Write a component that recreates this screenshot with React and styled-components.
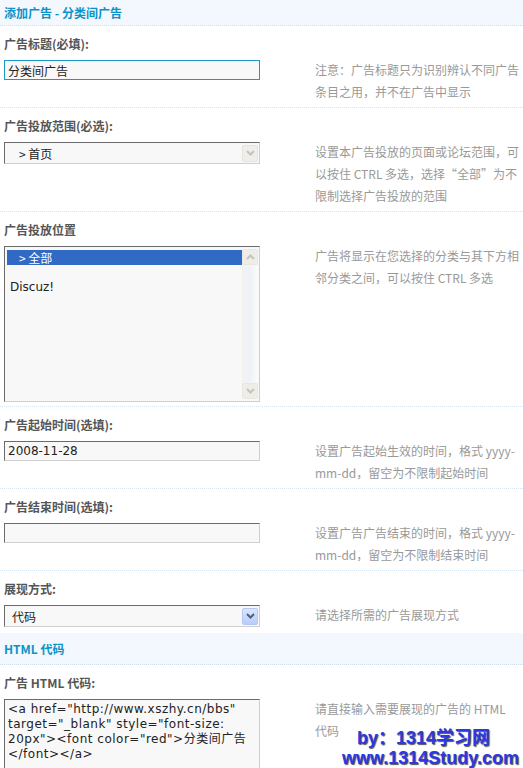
import React from 'react'
import styled, { createGlobalStyle } from 'styled-components'

const GlobalStyle = createGlobalStyle`
  html, body {
    margin: 0;
    padding: 0;
    background: #fff;
  }
  body {
    font-family: "Noto Sans CJK SC", "DejaVu Sans", sans-serif;
    font-size: 12px;
    color: #333;
  }
`

const Page = styled.div`
  position: relative;
  width: 523px;
  height: 768px;
  overflow: hidden;
  background: #fff;
`

const SectionHead = styled.div`
  display: flex;
  align-items: center;
  height: ${p => p.$h}px;
  padding-left: 4px;
  background: #f2f8fe;
  border-bottom: 1px dotted #c9dff0;
  color: #0a93c8;
  font-weight: bold;
  font-size: 12px;
`

const Row = styled.div`
  padding: 8px 0 ${p => (p.$last ? 6 : 4)}px 4px;
  border-bottom: ${p => (p.$last ? 'none' : '1px dotted #d6e6f2')};
`

const Label = styled.div`
  font-weight: bold;
  color: #555;
  line-height: 20px;
  margin-bottom: 6px;
`

const Body = styled.div`
  display: grid;
  grid-template-columns: 256px 208px;
  column-gap: 55px;
  align-items: start;
`

const Tip = styled.div`
  margin-top: -1px;
  color: #999;
  line-height: 22px;
  white-space: nowrap;
`

const TextInput = styled.input`
  display: block;
  box-sizing: border-box;
  width: 256px;
  height: 20px;
  margin: 0;
  padding: 0 3px;
  border: 1px solid;
  border-color: ${p => (p.$focus ? '#1a98c9' : '#6b6b6b #cfcfcf #cfcfcf #6b6b6b')};
  background: #f8f8f8;
  color: #222;
  font-family: ${p => (p.$latin ? '"DejaVu Sans", sans-serif' : '"Noto Sans CJK SC", sans-serif')};
  font-size: 12px;
  outline: none;
`

const SelectBox = styled.div`
  box-sizing: border-box;
  width: 256px;
  height: 22px;
  display: flex;
  align-items: center;
  justify-content: space-between;
  padding: 0 1px 0 ${p => p.$pad}px;
  border: 1px solid;
  border-color: #6b6b6b #cfcfcf #cfcfcf #6b6b6b;
  background: #f8f8f8;
  color: #222;
`

const ArrowBtn = styled.div`
  width: 16px;
  height: 17px;
  display: flex;
  align-items: center;
  justify-content: center;
  box-sizing: border-box;
  border: 1px solid ${p => (p.$active ? '#b4c8f5' : '#e6e5dd')};
  border-radius: 2px;
  background: ${p => (p.$active ? 'linear-gradient(#dbe5fd, #b9cdfa)' : '#efeee8')};
`

const ListBox = styled.div`
  box-sizing: border-box;
  width: 256px;
  height: 156px;
  display: flex;
  padding: 2px 1px 2px 2px;
  border: 1px solid;
  border-color: #6b6b6b #cfcfcf #cfcfcf #6b6b6b;
  background: #f8f8f8;
`

const Options = styled.div`
  flex: 1;
  padding-top: 1px;
`

const Option = styled.div`
  height: 15px;
  line-height: 15px;
  padding-left: ${p => p.$pad}px;
  background: ${p => (p.$selected ? '#316ac5' : 'transparent')};
  color: ${p => (p.$selected ? '#fff' : '#222')};
  font-family: ${p => (p.$latin ? '"DejaVu Sans", sans-serif' : 'inherit')};
`

const ScrollBar = styled.div`
  width: 16px;
  display: flex;
  flex-direction: column;
  justify-content: space-between;
  background: linear-gradient(90deg, #f3f3ef, #eef2f6 50%, #fbfbf8);
`

const ScrollBtn = styled.div`
  width: 16px;
  height: 16px;
  display: flex;
  align-items: center;
  justify-content: center;
  box-sizing: border-box;
  border: 1px solid #e8e7e0;
  border-radius: 2px;
  background: #eeede7;
`

const TextArea = styled.div`
  box-sizing: border-box;
  width: 256px;
  height: 90px;
  padding: 2px 3px;
  border: 1px solid;
  border-color: #6b6b6b #cfcfcf #cfcfcf #6b6b6b;
  background: #f8f8f8;
  color: #222;
  font-family: "DejaVu Sans", "Noto Sans CJK SC", sans-serif;
  font-size: 12px;
  line-height: 15px;
  letter-spacing: 0.5px;
  white-space: nowrap;
`

const Watermark = styled.div`
  position: absolute;
  right: 4px;
  bottom: 0;
  display: flex;
  flex-direction: column;
  align-items: flex-end;
  font-family: "Liberation Sans", "Noto Sans CJK SC", sans-serif;
  font-weight: bold;
  font-size: 18px;
  line-height: 20px;
  color: #2a39e4;
  text-shadow: 1px 1px 1px #555;
`

const WmLine = styled.div`
  padding-right: ${p => p.$pr}px;
`

const Chevron = ({ up, color }) => (
  <svg width="9" height="6" viewBox="0 0 9 6">
    <path d={up ? 'M1 5 L4.5 1.5 L8 5' : 'M1 1 L4.5 4.5 L8 1'} fill="none" stroke={color} strokeWidth="2" />
  </svg>
)

const Help = ({ lines }) => (
  <Tip>
    {lines.map((l, i) => (
      <div key={i}>{l}</div>
    ))}
  </Tip>
)

export default function App() {
  return (
    <Page>
      <GlobalStyle />
      <SectionHead $h={25}>添加广告 - 分类间广告</SectionHead>

      <Row>
        <Label>广告标题(必填):</Label>
        <Body>
          <TextInput $focus readOnly value="分类间广告" />
          <Help lines={['注意：广告标题只为识别辨认不同广告', '条目之用，并不在广告中显示']} />
        </Body>
      </Row>

      <Row>
        <Label>广告投放范围(必选):</Label>
        <Body>
          <SelectBox $pad={14}>
            <span>&gt; 首页</span>
            <ArrowBtn>
              <Chevron color="#c4c4bc" />
            </ArrowBtn>
          </SelectBox>
          <Help
            lines={[
              '设置本广告投放的页面或论坛范围，可',
              '以按住 CTRL 多选，选择“全部”为不',
              '限制选择广告投放的范围',
            ]}
          />
        </Body>
      </Row>

      <Row>
        <Label>广告投放位置</Label>
        <Body>
          <ListBox>
            <Options>
              <Option $selected $pad={12}>&gt; 全部</Option>
              <Option />
              <Option $latin $pad={3}>Discuz!</Option>
            </Options>
            <ScrollBar>
              <ScrollBtn>
                <Chevron up color="#c4c4bc" />
              </ScrollBtn>
              <ScrollBtn>
                <Chevron color="#c4c4bc" />
              </ScrollBtn>
            </ScrollBar>
          </ListBox>
          <Help lines={['广告将显示在您选择的分类与其下方相', '邻分类之间，可以按住 CTRL 多选']} />
        </Body>
      </Row>

      <Row>
        <Label>广告起始时间(选填):</Label>
        <Body>
          <TextInput $latin readOnly value="2008-11-28" />
          <Help lines={['设置广告起始生效的时间，格式 yyyy-', 'mm-dd，留空为不限制起始时间']} />
        </Body>
      </Row>

      <Row>
        <Label>广告结束时间(选填):</Label>
        <Body>
          <TextInput readOnly value="" />
          <Help lines={['设置广告广告结束的时间，格式 yyyy-', 'mm-dd，留空为不限制结束时间']} />
        </Body>
      </Row>

      <Row $last>
        <Label>展现方式:</Label>
        <Body>
          <SelectBox $pad={7}>
            <span>代码</span>
            <ArrowBtn $active>
              <Chevron color="#4d6185" />
            </ArrowBtn>
          </SelectBox>
          <Help lines={['请选择所需的广告展现方式']} />
        </Body>
      </Row>

      <SectionHead $h={31}>HTML 代码</SectionHead>

      <Row>
        <Label>广告 HTML 代码:</Label>
        <Body>
          <TextArea>
            &lt;a href="http://www.xszhy.cn/bbs"
            <br />
            target="_blank" style="font-size:
            <br />
            20px"&gt;&lt;font color="red"&gt;分类间广告
            <br />
            &lt;/font&gt;&lt;/a&gt;
          </TextArea>
          <Help lines={['请直接输入需要展现的广告的 HTML', '代码']} />
        </Body>
      </Row>

      <Watermark>
        <WmLine $pr={29}>by：1314学习网</WmLine>
        <WmLine $pr={0}>www.1314Study.com</WmLine>
      </Watermark>
    </Page>
  )
}
